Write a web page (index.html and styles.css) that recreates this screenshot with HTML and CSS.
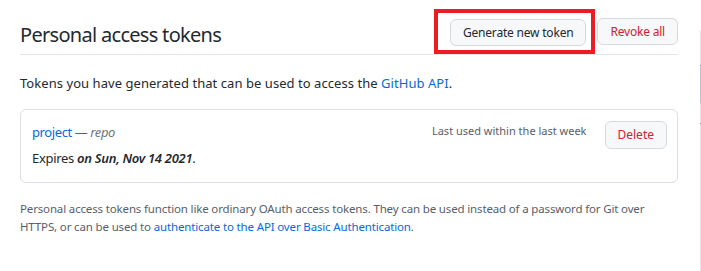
FILE: index.html
```html
<html>
<head>
    <link rel="stylesheet" href="styles.css">
</head>
<body>
    <div class="page">
        <div class="subhead">
            <h2 class="subhead-heading">Personal access tokens</h2>
            <div class="subhead-actions">
                <span class="highlight"><a class="btn" href="#">Generate new token</a></span>
                <a class="btn btn-danger" href="#">Revoke all</a>
            </div>
        </div>

        <p class="intro">Tokens you have generated that can be used to access the <a href="#">GitHub API</a>.</p>

        <div class="token-box">
            <div class="token-row">
                <div class="token-info">
                    <div class="token-name"><a href="#">project</a> &mdash; <em>repo</em></div>
                    <div class="token-expiry">Expires <em>on Sun, Nov 14 2021</em>.</div>
                </div>
                <span class="last-used">Last used within the last week</span>
                <a class="btn btn-danger btn-sm" href="#">Delete</a>
            </div>
        </div>

        <p class="note">Personal access tokens function like ordinary OAuth access tokens. They can be used instead of a password for Git over HTTPS, or can be used to <a href="#">authenticate to the API over Basic Authentication</a>.</p>
    </div>
    <div class="edge">
        <div class="edge-dot"></div>
        <div class="edge-thumb"></div>
        <div class="edge-dot edge-dot-low"></div>
    </div>
</body>
</html>
```

FILE: styles.css
```css
body {
    margin: 0;
    background: #fff;
    color: #24292f;
    font-family: "Noto Sans", "Open Sans", sans-serif;
    font-size: 13px;
}

a {
    color: #0969da;
    text-decoration: none;
}

.page {
    width: 658px;
    padding: 8px 0 0 20px;
}

.subhead {
    display: flex;
    align-items: center;
    justify-content: space-between;
    border-bottom: 1px solid #e4e7ea;
    height: 46px;
}

.subhead-heading {
    margin: 6px 0 0;
    font-size: 20px;
    font-weight: 400;
    letter-spacing: -0.7px;
}

.subhead-actions {
    display: flex;
    align-items: center;
    gap: 2px;
}

.highlight {
    display: flex;
    border: 4px solid #ec1c24;
    padding: 6px 5px 4px 12px;
}

.btn {
    display: inline-block;
    padding: 4px 12px;
    font-size: 12px;
    line-height: 17px;
    letter-spacing: -0.2px;
    color: #24292f;
    background: #f6f8fa;
    border: 1px solid #d6dade;
    border-radius: 6px;
}

.btn-danger {
    color: #cf222e;
}

.btn-sm {
    padding: 4px 12px 5px;
    letter-spacing: 0;
}

.intro {
    margin: 17px 0 0;
    line-height: 22px;
    letter-spacing: 0.05px;
}

.token-box {
    margin-top: 15px;
    border: 1px solid #dcdfe3;
    border-radius: 6px;
    padding: 11px 10px 13px 11px;
}

.token-row {
    display: flex;
    align-items: flex-start;
}

.token-info {
    flex: 1;
}

.token-name {
    line-height: 22px;
    color: #57606a;
    letter-spacing: -0.4px;
}

.token-name em {
    color: #6e7781;
}

.token-expiry {
    margin-top: 4px;
    line-height: 22px;
    letter-spacing: -0.3px;
}

.token-expiry em {
    font-weight: 600;
}

.last-used {
    margin-top: 2px;
    font-size: 11px;
    color: #57606a;
    margin-right: 18px;
}

.note {
    margin: 17px 0 0;
    font-size: 11.5px;
    letter-spacing: -0.15px;
    line-height: 17.5px;
    color: #57606a;
}

.edge {
    position: absolute;
    left: 700px;
    top: 30px;
    width: 1px;
    bottom: 0;
    background: #e3e5e8;
}

.edge-dot {
    margin-top: 35px;
    height: 1px;
    background: #8c9196;
}

.edge-thumb {
    margin-top: 1px;
    height: 36px;
    background: #bcc3ca;
}

.edge-dot-low {
    margin-top: 20px;
}
```
